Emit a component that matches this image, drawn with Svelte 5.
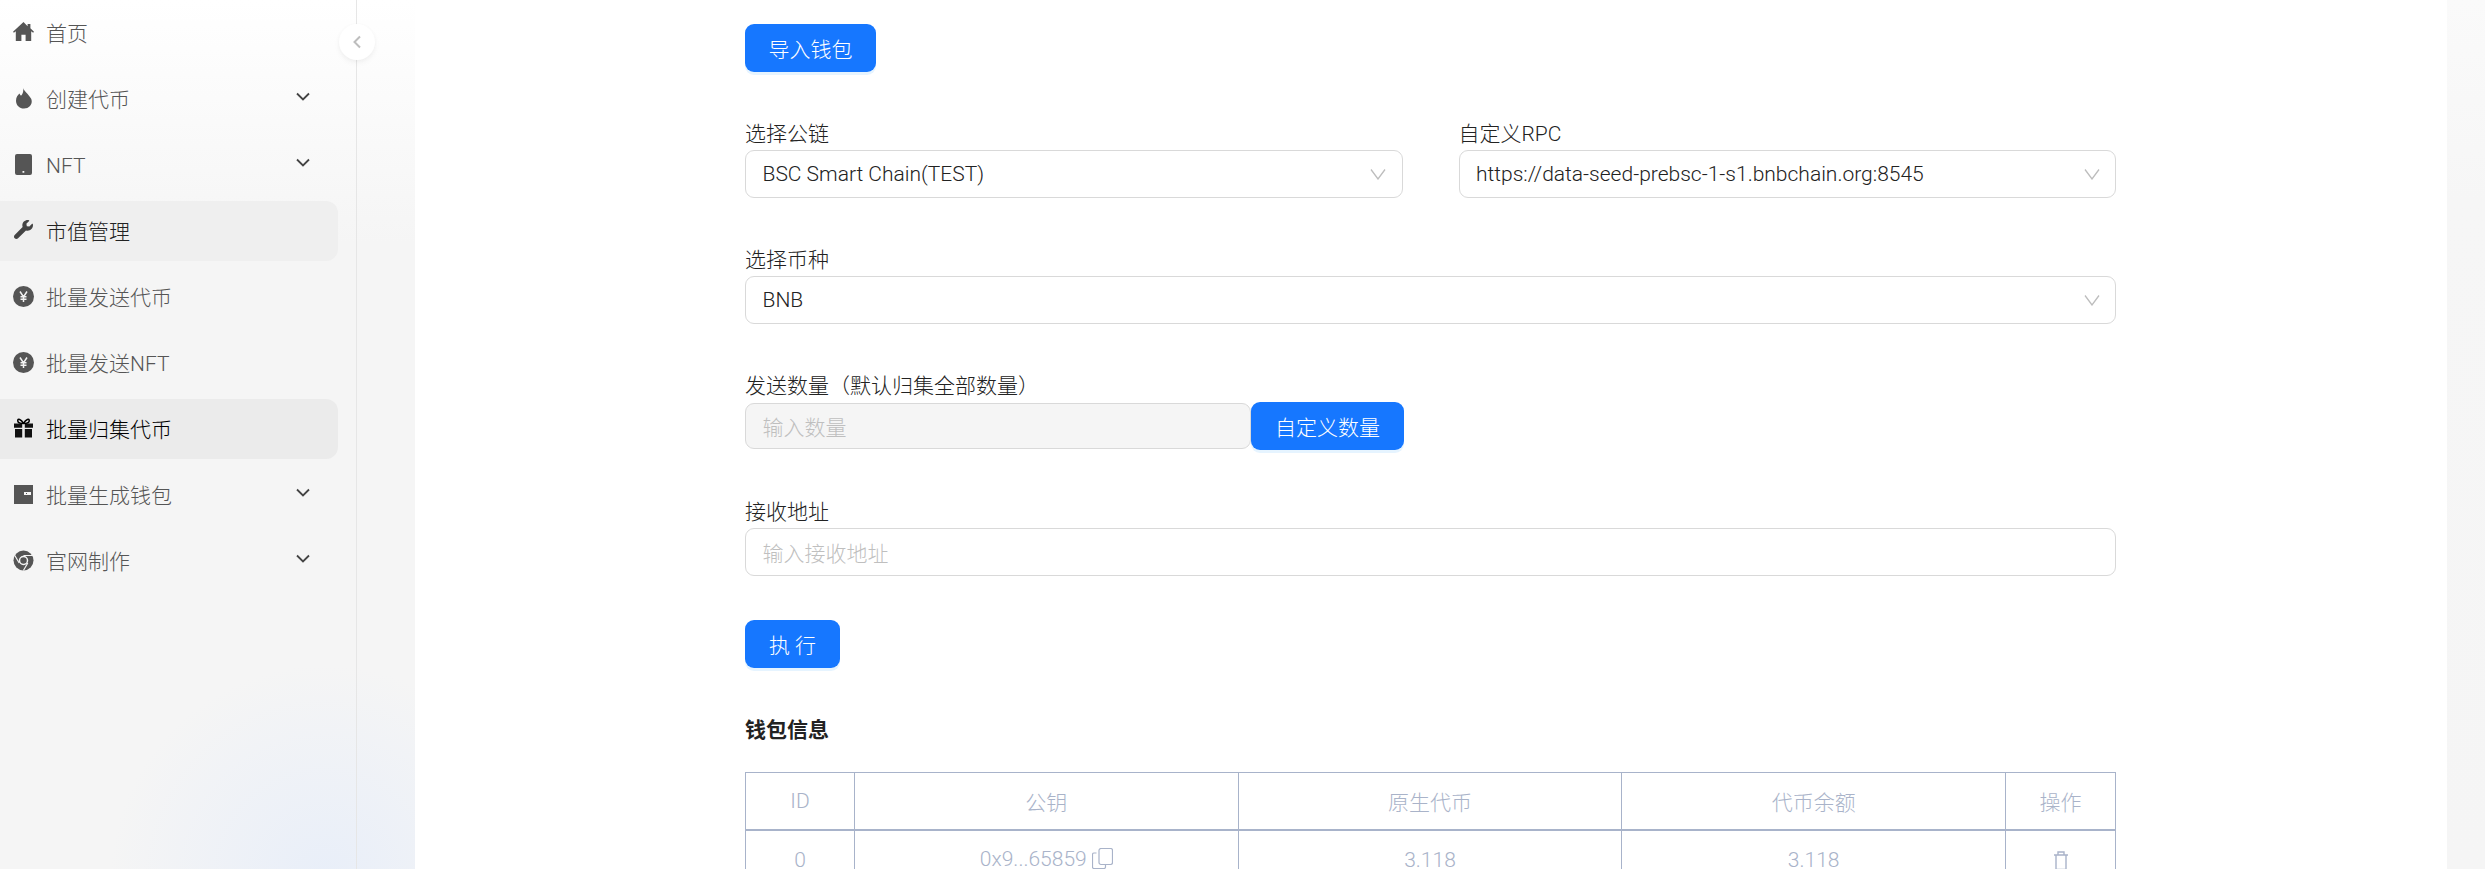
<script>
  const nav = [
    { label: '首页', icon: 'home' },
    { label: '创建代币', icon: 'fire', sub: true },
    { label: 'NFT', icon: 'tablet', sub: true },
    { label: '市值管理', icon: 'wrench', tone: 'soft' },
    { label: '批量发送代币', icon: 'yen' },
    { label: '批量发送NFT', icon: 'yen' },
    { label: '批量归集代币', icon: 'gift', tone: 'strong' },
    { label: '批量生成钱包', icon: 'wallet', sub: true },
    { label: '官网制作', icon: 'chrome', sub: true }
  ];
  const columns = ['ID', '公钥', '原生代币', '代币余额', '操作'];
</script>

{#snippet icon(name)}
  <svg class="nav-icon" viewBox="0 0 21 21" aria-hidden="true">
    {#if name === 'home'}
      <path d="M10.500 0 0 9.800l.9 1 1.900-1.600V19h5.600v-6.300h4.200V19h5.600V9.200l1.900 1.600.9-1L17.400 6.300V2h-2.800v2.200z" />
    {:else if name === 'fire'}
      <path d="M10 0c1 3 5.500 6 8 10.500 1.500 3 .5 6-1 7.500-1.500 1.700-3.700 2.500-6 2.500-4.600 0-8-3.400-8-7.800 0-3.700 1.900-5.700 3.500-7.200.4 1 .8 1.700 1.500 2.200C9 6.700 11 4 10 0z" />
    {:else if name === 'tablet'}
      <path fill-rule="evenodd" d="M4 0h13a2 2 0 0 1 2 2v17a2 2 0 0 1-2 2H4a2 2 0 0 1-2-2V2a2 2 0 0 1 2-2zm5.500 17v1.800h1.800V17z" />
    {:else if name === 'wrench'}
      <svg x="1" y="0" width="19" height="19" viewBox="0 0 512 512">
        <path d="M507.730 109.100c-2.240-9.030-13.540-12.090-20.120-5.510l-74.360 74.360-67.880-11.310-11.310-67.880 74.360-74.360c6.620-6.620 3.430-17.900-5.660-20.160-47.380-11.740-99.550.91-136.580 37.930-39.640 39.640-50.550 97.100-34.050 147.200L18.740 402.760c-24.990 24.990-24.990 65.510 0 90.500 24.990 24.990 65.510 24.990 90.500 0l213.210-213.210c50.120 16.710 107.470 5.680 147.370-34.220 37.070-37.070 49.700-89.320 37.910-136.730z" />
      </svg>
    {:else if name === 'yen'}
      <circle cx="10.500" cy="10.500" r="10.500" />
      <path class="cut" d="M7 5.500l3.500 5.300L14 5.500M10.500 10.800V16M7.500 10.800h6M7.500 13.200h6" />
    {:else if name === 'gift'}
      <path fill-rule="evenodd" d="M1 5.500h19v4.300H11.800V5.500H9.200v4.300H1zM2 11h7.200v8.500H2zM11.800 11H19v8.500h-7.200z" />
      <path class="bow" d="M10.500 5.500C8 1 4.500 0 4.800 3c.2 2 3 2.500 5.700 2.500zM10.500 5.500C13 1 16.500 0 16.200 3c-.2 2-3 2.500-5.700 2.500z" />
    {:else if name === 'wallet'}
      <path fill-rule="evenodd" d="M1 1h19v19H1zM11 8v3h7V8z" />
      <path d="M13 9h1v1h-1z" />
    {:else if name === 'chrome'}
      <circle cx="10.500" cy="10.500" r="10" />
      <circle class="hole" cx="10.500" cy="10.500" r="4" />
      <path class="cut thin" d="M10.500 5.500H19.500M6.200 13 1.800 5.500M14.800 13l-4.400 7.500" />
    {/if}
  </svg>
{/snippet}

{#snippet chevron()}
  <svg class="select-arrow" viewBox="0 0 16 12" aria-hidden="true"><path d="M1 1.500 8 11l7-9.500" /></svg>
{/snippet}

<div class="layout">
  <aside class="sider">
    <nav class="menu">
      {#each nav as item}
        <div class="item {item.tone ?? ''}">
          {@render icon(item.icon)}
          <span class="item-label">{item.label}</span>
          {#if item.sub}
            <svg class="caret" viewBox="0 0 14 9" aria-hidden="true"><path d="M1 1.500 7 7.500l6-6" /></svg>
          {/if}
        </div>
      {/each}
    </nav>
    <button class="collapse" aria-label="收起">
      <svg viewBox="0 0 10 14" aria-hidden="true"><path d="M8 1.500 2.500 7 8 12.500" /></svg>
    </button>
  </aside>

  <main class="content">
    <button class="btn first">导入钱包</button>

    <div class="pair">
      <div class="field">
        <span class="label">选择公链</span>
        <div class="control"><span>BSC Smart Chain(TEST)</span>{@render chevron()}</div>
      </div>
      <div class="field">
        <span class="label">自定义RPC</span>
        <div class="control"><span>https://data-seed-prebsc-1-s1.bnbchain.org:8545</span>{@render chevron()}</div>
      </div>
    </div>

    <div class="field">
      <span class="label">选择币种</span>
      <div class="control"><span>BNB</span>{@render chevron()}</div>
    </div>

    <div class="field half">
      <span class="label">发送数量（默认归集全部数量）</span>
      <div class="amount">
        <div class="control disabled"><span class="placeholder">输入数量</span></div>
        <button class="btn wide">自定义数量</button>
      </div>
    </div>

    <div class="field">
      <span class="label">接收地址</span>
      <div class="control"><span class="placeholder">输入接收地址</span></div>
    </div>

    <button class="btn run">执 行</button>

    <h2 class="title">钱包信息</h2>

    <table class="wallets">
      <thead>
        <tr>
          {#each columns as column}<th>{column}</th>{/each}
        </tr>
      </thead>
      <tbody>
        <tr>
          <td>0</td>
          <td>
            0x9...65859
            <svg class="copy" viewBox="0 0 21 21" aria-hidden="true">
              <rect x="7" y="0.500" width="13.500" height="16" rx="2" />
              <path d="M4.500 5H2a1.500 1.500 0 0 0-1.500 1.500V19A1.500 1.500 0 0 0 2 20.500h10a1.500 1.500 0 0 0 1.500-1.500v-2" />
            </svg>
          </td>
          <td>3.118</td>
          <td>3.118</td>
          <td>
            <svg class="trash" viewBox="0 0 16 20" aria-hidden="true">
              <path d="M1 4h14M5 4V1h6v3M3 4v14.500h10V4" />
            </svg>
          </td>
        </tr>
      </tbody>
    </table>
  </main>

  <div class="edge"></div>
</div>

<style>
  :global(body) {
    margin: 0;
    overflow: hidden;
  }

  button {
    font: inherit;
    border: 0;
    padding: 0;
  }

  .layout {
    display: flex;
    height: 100vh;
    overflow: hidden;
    font-family: Roboto, "Noto Sans CJK SC", sans-serif;
    font-size: 21px;
    font-weight: 300;
    color: #222;
    background:
      radial-gradient(circle 215px at 325px 880px, rgba(228, 236, 250, 0.75), rgba(245, 245, 245, 0)),
      linear-gradient(#fff, #f5f5f5 28%);
  }

  .sider {
    position: relative;
    flex: none;
    box-sizing: border-box;
    width: 357px;
    margin-right: 58px;
    border-right: 1px solid #e6e6e6;
  }

  .menu {
    display: flex;
    flex-direction: column;
    gap: 6px;
    width: 338px;
    padding-top: 3px;
  }

  .item {
    display: flex;
    align-items: center;
    height: 60px;
    padding: 0 28px 0 13px;
    border-radius: 0 12px 12px 0;
    color: #555;
    fill: #555;
  }

  .item.soft {
    background: #efefef;
    color: #222;
    fill: #444;
  }

  .item.strong {
    background: #ebebeb;
    color: #000;
    fill: #111;
  }

  .nav-icon {
    flex: none;
    width: 21px;
    height: 21px;
    margin-right: 12px;
    margin-top: -2px;
  }

  .cut {
    fill: none;
    stroke: #f3f3f3;
    stroke-width: 1.500;
  }

  .cut.thin {
    stroke-width: 1.200;
  }

  .hole {
    fill: #555;
    stroke: #f5f5f5;
    stroke-width: 1.500;
  }

  .bow {
    fill: none;
    stroke: currentColor;
    stroke-width: 1.600;
  }

  .item-label {
    flex: 1;
    line-height: 30px;
    margin-top: 2px;
  }

  .caret {
    flex: none;
    width: 14px;
    height: 9px;
    margin-bottom: 5px;
    fill: none;
    stroke: #444;
    stroke-width: 1.800;
  }

  .collapse {
    position: absolute;
    top: 24px;
    right: -19px;
    display: flex;
    align-items: center;
    justify-content: center;
    width: 36px;
    height: 36px;
    border-radius: 50%;
    background: #fff;
    box-shadow: 0 3px 6px rgba(0, 0, 0, 0.04), 0 1px 4px rgba(0, 0, 0, 0.03);
  }

  .collapse svg {
    width: 10px;
    height: 14px;
    fill: none;
    stroke: #bdbdbd;
    stroke-width: 2;
  }

  .content {
    flex: none;
    box-sizing: border-box;
    width: 2032px;
    height: 100%;
    padding: 24px 331px 0 330px;
    background: #fff;
  }

  .edge {
    flex: 1;
    background: linear-gradient(#fafafa, #f6f6f6 200px, #f5f5f5);
  }

  .btn {
    display: block;
    height: 48px;
    padding: 0 22.500px;
    border-radius: 9px;
    background: #1677ff;
    color: #fff;
    font-weight: 300;
    box-shadow: 0 3px 0 rgba(5, 145, 255, 0.1);
  }

  .btn.first {
    width: 131px;
    padding: 0;
  }

  .btn.wide {
    flex: none;
    width: 153px;
    padding: 0;
  }

  .btn.run {
    width: 95px;
    padding: 0;
    margin-top: 44px;
  }

  .pair {
    display: grid;
    grid-template-columns: 1fr 1fr;
    gap: 56px;
  }

  .field {
    margin-top: 48px;
  }

  .label {
    display: block;
    height: 30px;
    line-height: 29px;
  }

  .control {
    box-sizing: border-box;
    display: flex;
    align-items: center;
    justify-content: space-between;
    height: 48px;
    padding: 0 16.500px;
    border: 1.500px solid #d9d9d9;
    border-radius: 9px;
    background: #fff;
  }

  .amount {
    display: flex;
    align-items: center;
    width: 659px;
  }

  .control.disabled {
    flex: 1;
    height: 46px;
    background: #f5f5f5;
  }

  .placeholder {
    color: #bfbfbf;
  }

  .select-arrow {
    flex: none;
    width: 16px;
    height: 12px;
    margin-right: -1px;
    fill: none;
    stroke: #bdbdbd;
    stroke-width: 1.300;
  }

  .title {
    margin: 46px 0 26px;
    height: 32px;
    line-height: 32px;
    font-size: 21px;
    font-weight: 700;
    color: #222;
  }

  .wallets {
    width: 1371px;
    table-layout: fixed;
    border-collapse: collapse;
    color: #a9b3c9;
    text-align: center;
  }

  .wallets th,
  .wallets td {
    padding: 0;
    border: 1px solid #a8b3ca;
    font-weight: 300;
  }

  .wallets th {
    height: 56px;
    border-bottom-width: 2px;
  }

  .wallets td {
    height: 58px;
  }

  .wallets th:first-child {
    width: 108px;
  }

  .wallets th:last-child {
    width: 109px;
  }

  .copy {
    width: 21px;
    height: 21px;
    margin-bottom: 4px;
    vertical-align: middle;
    fill: none;
    stroke: #a9b3c9;
    stroke-width: 1.200;
  }

  .trash {
    width: 16px;
    height: 20px;
    vertical-align: middle;
    fill: none;
    stroke: #a9b3c9;
    stroke-width: 1.400;
  }
</style>
